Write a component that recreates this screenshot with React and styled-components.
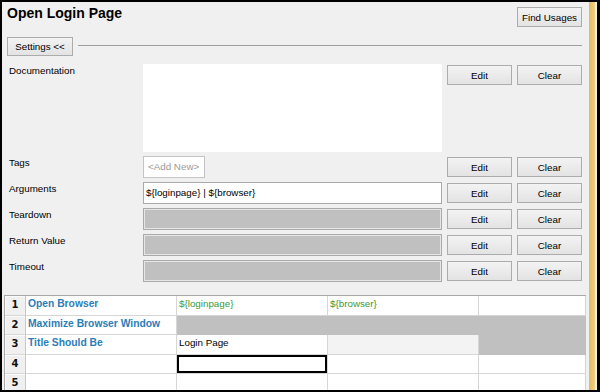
import React from "react";
import styled, { createGlobalStyle } from "styled-components";

const GlobalStyle = createGlobalStyle`
  html, body {
    margin: 0;
    padding: 0;
    background: #f0f0f0;
  }
  body {
    font-family: "Liberation Sans", Arial, sans-serif;
  }
  * {
    box-sizing: border-box;
  }
`;

const Frame = styled.div`
  width: 600px;
  height: 392px;
  display: flex;
  border: 2px solid #000;
  border-right-width: 3px;
  background: #f0f0f0;
  overflow: hidden;
`;

const Main = styled.div`
  flex: 1;
  min-width: 0;
  display: flex;
  flex-direction: column;
`;

const Edge = styled.div`
  width: 11px;
  flex: none;
  border-left: 3px solid #f0f0f0;
  border-right: 2px solid #f6efe0;
  background: linear-gradient(90deg, #e4ba5e, #efcd84);
`;

const Header = styled.div`
  height: 35px;
  flex: none;
  display: flex;
  justify-content: space-between;
  align-items: flex-start;
  padding: 3px 4px 0 5px;
`;

const Title = styled.h1`
  margin: 0;
  font: bold 14px/16px "Liberation Sans", Arial, sans-serif;
  color: #000;
`;

const Button = styled.button`
  width: ${(p) => p.$w || 65}px;
  height: ${(p) => p.$h || 20}px;
  margin: 0;
  margin-top: ${(p) => p.$top || 0}px;
  padding: 0;
  border: 1px solid #acacac;
  border-radius: 0;
  background: linear-gradient(#f3f3f3, #e3e3e3);
  font: 9.8px "Liberation Sans", Arial, sans-serif;
  color: #000;
  text-align: center;
`;

const SettingsRow = styled.div`
  flex: none;
  display: flex;
  align-items: center;
  padding: 0 4px 0 5px;
`;

const Rule = styled.div`
  flex: 1;
  height: 1px;
  margin-left: 5px;
  margin-top: -2px;
  background: #a0a0a0;
`;

const Fields = styled.div`
  flex: none;
  margin-top: 8px;
  padding: 0 3px 0 7px;
  display: grid;
  grid-template-columns: 129px 299px 65px 65px;
  grid-template-rows: 88px repeat(5, 22px);
  column-gap: 5px;
  row-gap: 4px;
`;

const Label = styled.div`
  font: 9.8px/12px "Liberation Sans", Arial, sans-serif;
  color: #000;
  padding-top: 1px;
`;

const fieldLook = {
  blank: "background: #fff; border: none;",
  input: "background: #fff; border: 1px solid #a9a9a9;",
  disabled:
    "background: #c0c0c0; border: 1px solid #a9a9a9; box-shadow: inset 0 0 0 1px #e6e6e6;",
  tag: "background: #fff; border: 1px solid #c4c4c4; width: 62px;",
};

const Field = styled.div`
  ${(p) => fieldLook[p.$look]}
  font: 9.8px/20px "Liberation Sans", Arial, sans-serif;
  color: ${(p) => (p.$look === "tag" ? "#9a9a9a" : "#000")};
  padding-left: ${(p) => (p.$look === "tag" ? 4 : 2)}px;
  white-space: nowrap;
`;

const RowButton = styled(Button)`
  align-self: start;
  margin-top: 1px;
`;

const Sheet = styled.div`
  flex: none;
  margin: 13px 0 0 2px;
  display: grid;
  grid-template-columns: 21px 151px 151px 151px 1fr;
  grid-auto-rows: 19.5px;
  border-top: 1px solid #a9a9a9;
  border-left: 1px solid #a9a9a9;
  background: #fff;
`;

const RowHead = styled.div`
  background: #f0f0f0;
  border-right: 1px solid #c8c8c8;
  border-bottom: 1px solid #d8d8d8;
  box-shadow: inset 1px 1px 0 #fafafa;
  font: bold 10px/18px "DejaVu Sans", Verdana, sans-serif;
  color: #111;
  text-align: center;
`;

const cellBg = { white: "#fff", gray: "#c0c0c0", light: "#f3f3f3" };

const Cell = styled.div`
  background: ${(p) => cellBg[p.$tone || "white"]};
  border-right: 1px solid ${(p) => (p.$tone === "gray" ? "#c0c0c0" : "#d6d6d6")};
  border-bottom: 1px solid ${(p) => (p.$tone === "gray" ? "#c0c0c0" : "#d6d6d6")};
  box-shadow: ${(p) => (p.$selected ? "inset 0 0 0 2px #000" : "none")};
  padding-left: 2px;
  white-space: nowrap;
  overflow: hidden;
  font: ${(p) =>
    p.$kind === "keyword"
      ? 'bold 10.3px/16px "Liberation Sans", Arial, sans-serif'
      : '9.8px/16px "Liberation Sans", Arial, sans-serif'};
  color: ${(p) =>
    p.$kind === "keyword" ? "#2b7db8" : p.$kind === "var" ? "#3b9a36" : "#000"};
`;

const settings = [
  { label: "Documentation", look: "blank", value: "" },
  { label: "Tags", look: "tag", value: "<Add New>" },
  { label: "Arguments", look: "input", value: "${loginpage} | ${browser}" },
  { label: "Teardown", look: "disabled", value: "" },
  { label: "Return Value", look: "disabled", value: "" },
  { label: "Timeout", look: "disabled", value: "" },
];

const steps = [
  [
    { text: "Open Browser", kind: "keyword" },
    { text: "${loginpage}", kind: "var" },
    { text: "${browser}", kind: "var" },
    {},
  ],
  [
    { text: "Maximize Browser Window", kind: "keyword" },
    { tone: "gray" },
    { tone: "gray" },
    { tone: "gray" },
  ],
  [
    { text: "Title Should Be", kind: "keyword" },
    { text: "Login Page" },
    { tone: "light" },
    { tone: "gray" },
  ],
  [{}, { selected: true }, {}, {}],
  [{}, {}, {}, {}],
];

function App() {
  return (
    <>
      <GlobalStyle />
      <Frame>
        <Main>
          <Header>
            <Title>Open Login Page</Title>
            <Button $top={2}>Find Usages</Button>
          </Header>
          <SettingsRow>
            <Button $w={66} $h={19}>
              Settings &lt;&lt;
            </Button>
            <Rule />
          </SettingsRow>
          <Fields>
            {settings.map((s) => (
              <React.Fragment key={s.label}>
                <Label>{s.label}</Label>
                <Field $look={s.look}>{s.value}</Field>
                <RowButton>Edit</RowButton>
                <RowButton>Clear</RowButton>
              </React.Fragment>
            ))}
          </Fields>
          <Sheet>
            {steps.map((row, i) => (
              <React.Fragment key={i}>
                <RowHead>{i + 1}</RowHead>
                {row.map((c, j) => (
                  <Cell
                    key={j}
                    $kind={c.kind}
                    $tone={c.tone}
                    $selected={c.selected}
                  >
                    {c.text}
                  </Cell>
                ))}
              </React.Fragment>
            ))}
          </Sheet>
        </Main>
        <Edge />
      </Frame>
    </>
  );
}

export default App;
